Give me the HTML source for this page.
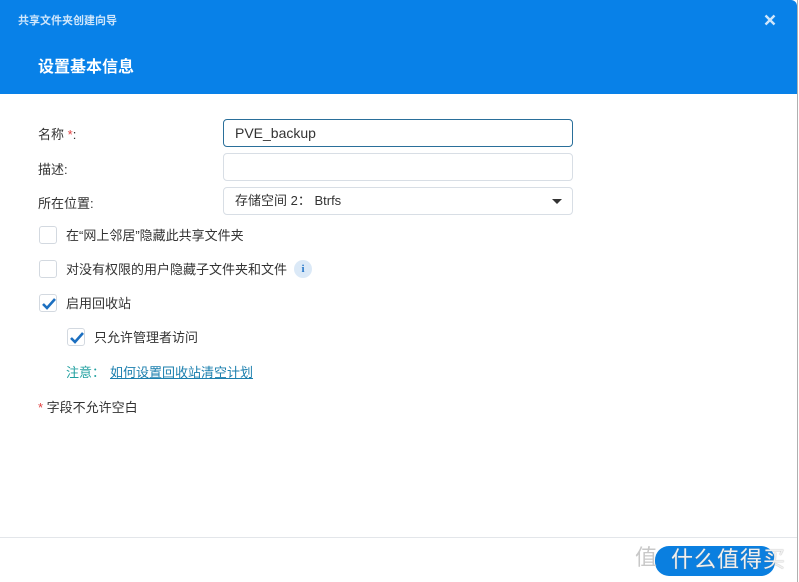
<!DOCTYPE html>
<html><head><meta charset="utf-8"><style>
*{margin:0;padding:0;box-sizing:border-box}
body{width:799px;height:582px;overflow:hidden;background:#fff;font-family:"Liberation Sans","Noto Sans CJK SC",sans-serif;font-size:13px;color:#333;position:relative}
.hdr{position:absolute;left:0;top:0;width:797px;height:94px;background:#0881E8;border-top-right-radius:6px}
.t1{position:absolute;left:18px;top:12px;color:#cfe6fb;font-size:11px;font-weight:bold}
.t2{position:absolute;left:38px;top:53px;color:#fff;font-size:16px;font-weight:bold}
.x{position:absolute;left:764px;top:14px}
.lab{position:absolute;left:38px;color:#333}
.inp{position:absolute;left:223px;width:350px;height:28px;border:1px solid #d8dee5;border-radius:4px;padding-left:11px;line-height:26px;color:#333;font-size:14px}
.cb{position:absolute;width:18px;height:18px;border:1px solid #d3d9e0;border-radius:3px;background:#fff}
.cb svg{position:absolute;left:1px;top:2px}
.ct{position:absolute;color:#333}
</style></head><body>
<div class="hdr"><div class="t1">共享文件夹创建向导</div><div class="t2">设置基本信息</div>
<svg class="x" width="12" height="12" viewBox="0 0 12 12"><path d="M1.5 1.5 L10.5 10.5 M10.5 1.5 L1.5 10.5" stroke="#cfe6fb" stroke-width="2.4"/></svg></div>
<div class="lab" style="top:124px">名称 <span style="color:#e04040">*</span>:</div>
<div class="inp" style="top:119px;border-color:#2a6f9a;border-width:1.5px">PVE_backup</div>
<div class="lab" style="top:159px">描述:</div>
<div class="inp" style="top:153px"></div>
<div class="lab" style="top:193px">所在位置:</div>
<div class="inp" style="top:187px;font-size:13px">存储空间 2：&nbsp;Btrfs<span style="position:absolute;right:10px;top:11px;width:0;height:0;border-left:5px solid transparent;border-right:5px solid transparent;border-top:5px solid #333"></span></div>
<div class="cb" style="left:39px;top:226px"></div><div class="ct" style="left:66px;top:225px">在“网上邻居”隐藏此共享文件夹</div>
<div class="cb" style="left:39px;top:260px"></div><div class="ct" style="left:66px;top:259px">对没有权限的用户隐藏子文件夹和文件</div>
<div style="position:absolute;left:294px;top:260px;width:18px;height:18px;border-radius:50%;background:#dbe9f7;color:#2676c8;font-size:11px;font-weight:bold;text-align:center;line-height:18px;font-family:'Liberation Serif',serif">i</div>
<div class="cb" style="left:39px;top:294px"><svg width="16" height="14" viewBox="0 0 16 14"><path d="M2 7 L6 11 L14 2" stroke="#1c6fc0" stroke-width="2.6" fill="none"/></svg></div><div class="ct" style="left:66px;top:293px">启用回收站</div>
<div class="cb" style="left:67px;top:328px"><svg width="16" height="14" viewBox="0 0 16 14"><path d="M2 7 L6 11 L14 2" stroke="#1c6fc0" stroke-width="2.6" fill="none"/></svg></div><div class="ct" style="left:94px;top:327px">只允许管理者访问</div>
<div class="ct" style="left:66px;top:362px;color:#21a0a0">注意：</div><div class="ct" style="left:110px;top:362px;color:#1b7fae;text-decoration:underline">如何设置回收站清空计划</div>
<div class="ct" style="left:38px;top:397px"><span style="color:#e04040">*</span> 字段不允许空白</div>
<div style="position:absolute;left:0;top:537px;width:797px;height:1px;background:#e3e6ea"></div>
<div style="position:absolute;left:655px;top:546px;width:120px;height:30px;border-radius:14px;background:#0a7fe0"></div>
<div style="position:absolute;left:635px;top:540px;font-size:22px;color:#c8c8c8">值</div>
<div style="position:absolute;left:671px;top:542px;font-size:22px;color:#f0f0f0;letter-spacing:1px;text-shadow:0 0 1px #888">什么值得买</div>
<div style="position:absolute;left:797px;top:0;width:1px;height:582px;background:#b0b0b0"></div>
</body></html>
